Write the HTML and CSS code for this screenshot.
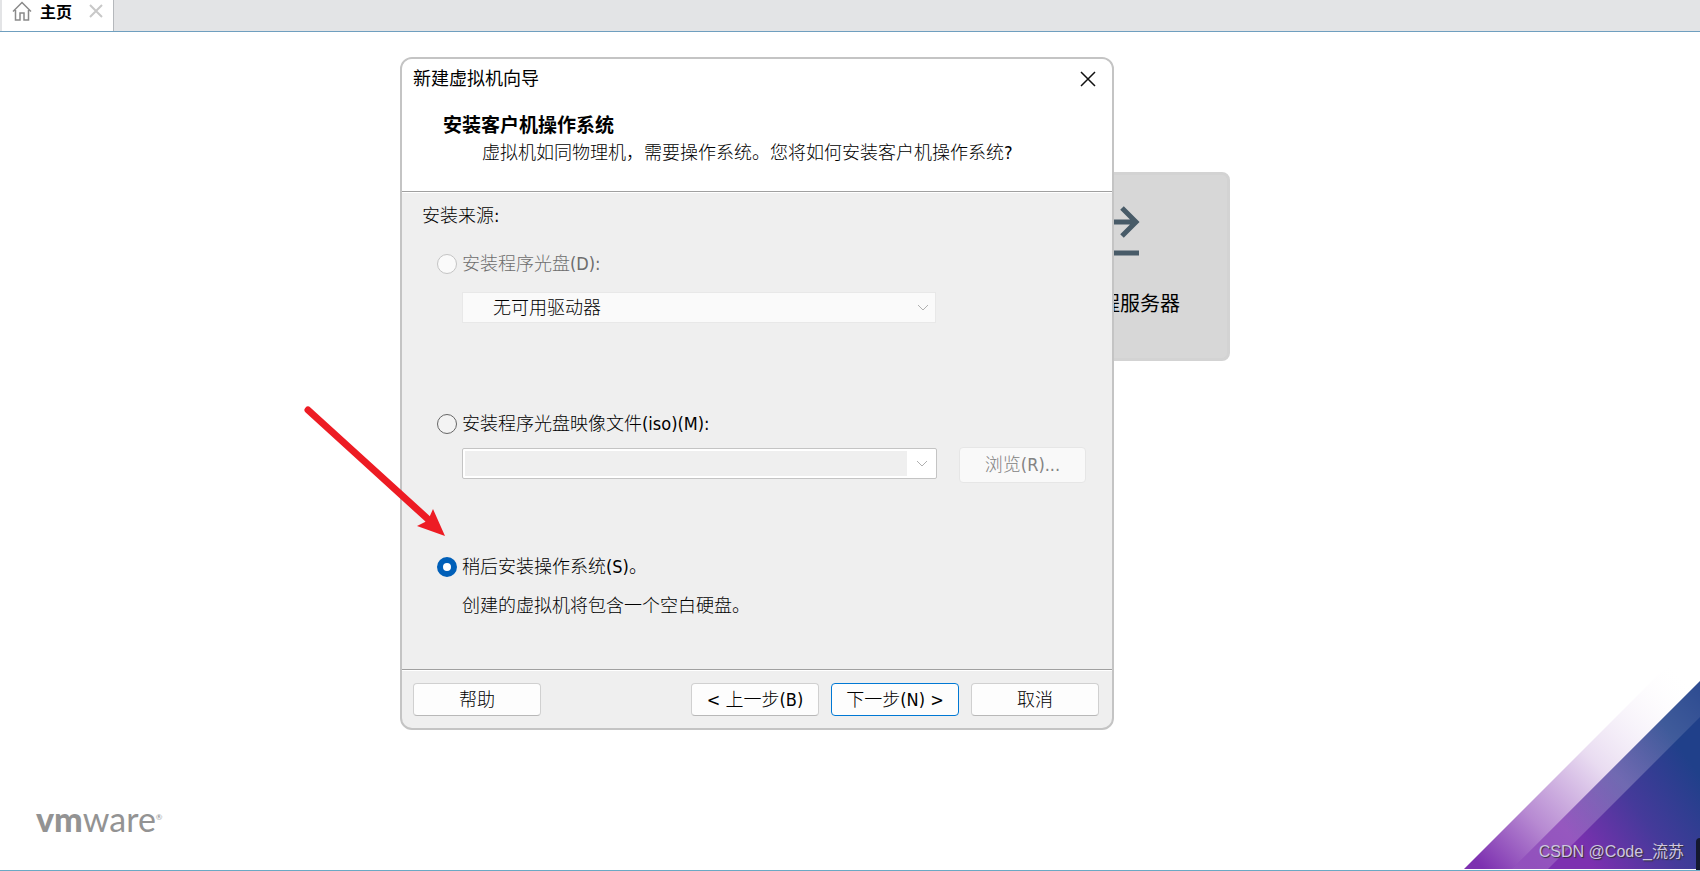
FILE: index.html
```html
<!DOCTYPE html>
<html lang="zh-CN">
<head>
    <meta charset="UTF-8">
    <meta name="viewport" content="width=device-width, initial-scale=1.0">
    <title>新建虚拟机向导</title>
    <link rel="stylesheet" href="styles.css">
</head>
<body>
    <nav class="tabs">
        <div class="tab">
            <svg class="home-icon" width="20" height="20" viewBox="0 0 20 20"><path d="M1 10.500 10 1.500l9 9M3.500 9v10H8v-7h4v7h4.500V9"/></svg>
            <a class="tab-name" href="#">主页</a>
            <button class="tab-close" aria-label="关闭标签">
                <svg width="14" height="14" viewBox="0 0 14 14"><path d="M1 1l12 12M13 1 1 13"/></svg>
            </button>
        </div>
    </nav>

    <main class="desktop">
        <button class="card">
            <svg width="60" height="60" viewBox="0 0 60 60">
                <path d="M2 23h54M42 9l14 14-14 14" stroke-width="5"/>
                <path d="M2 54h57" stroke-width="5"/>
            </svg>
            <span>连接远程服务器</span>
        </button>

        <div class="logo"><b>vm</b>ware<sup>®</sup></div>

        <svg class="corner" width="236" height="236" viewBox="0 0 236 236">
            <defs>
                <linearGradient id="fade" gradientUnits="userSpaceOnUse" x1="10" y1="226" x2="210" y2="30">
                    <stop offset="0" stop-color="#7d30b0"/>
                    <stop offset="0.25" stop-color="#b78ad2"/>
                    <stop offset="0.55" stop-color="#e9dcf1"/>
                    <stop offset="1" stop-color="#fff" stop-opacity="0"/>
                </linearGradient>
                <linearGradient id="base" gradientUnits="userSpaceOnUse" x1="104" y1="200" x2="220" y2="120">
                    <stop offset="0" stop-color="#7d30b0"/>
                    <stop offset="0.5" stop-color="#453a9a"/>
                    <stop offset="1" stop-color="#20408a"/>
                </linearGradient>
                <linearGradient id="shine" gradientUnits="userSpaceOnUse" x1="60" y1="226" x2="236" y2="50">
                    <stop offset="0" stop-color="#fff" stop-opacity="0.16"/>
                    <stop offset="0.5" stop-color="#fff" stop-opacity="0.24"/>
                    <stop offset="1" stop-color="#fff" stop-opacity="0.06"/>
                </linearGradient>
            </defs>
            <path d="M0 236 236 0v236z" fill="url(#fade)"/>
            <path d="M48 236 236 48v188z" fill="url(#base)"/>
            <path d="M48 236 236 48v36L84 236z" fill="url(#shine)"/>
        </svg>
        <div class="edge"></div>
        <div class="watermark">CSDN @Code_流苏</div>

        <form class="dialog">
            <header class="dialog-header">
                <div class="title-bar">
                    <span>新建虚拟机向导</span>
                    <button type="button" class="close" aria-label="关闭">
                        <svg width="16" height="16" viewBox="0 0 16 16"><path d="M1 1l14 14M15 1 1 15"/></svg>
                    </button>
                </div>
                <h1>安装客户机操作系统</h1>
                <p>虚拟机如同物理机，需要操作系统。您将如何安装客户机操作系统?</p>
            </header>

            <section class="options">
                <h2>安装来源:</h2>

                <label class="option disabled"><input type="radio" name="source" disabled>安装程序光盘(D):</label>
                <div class="drive">
                    <select aria-label="驱动器" disabled>
                        <option>无可用驱动器</option>
                    </select>
                    <svg class="chevron" width="12" height="8" viewBox="0 0 12 8"><path d="M1 1l5 5 5-5"/></svg>
                </div>

                <label class="option"><input type="radio" name="source">安装程序光盘映像文件(iso)(M):</label>
                <div class="iso-row">
                    <div class="combo">
                        <input type="text" aria-label="映像文件" disabled>
                        <button type="button" aria-label="展开" disabled>
                            <svg class="chevron" width="12" height="8" viewBox="0 0 12 8"><path d="M1 1l5 5 5-5"/></svg>
                        </button>
                    </div>
                    <button type="button" class="browse" disabled>浏览(R)...</button>
                </div>

                <label class="option"><input type="radio" name="source" checked>稍后安装操作系统(S)。</label>
                <p class="hint">创建的虚拟机将包含一个空白硬盘。</p>
            </section>

            <footer class="actions">
                <button type="button" class="btn help">帮助</button>
                <button type="button" class="btn">&lt; 上一步(B)</button>
                <button type="button" class="btn primary">下一步(N) &gt;</button>
                <button type="button" class="btn">取消</button>
            </footer>
        </form>

        <svg class="arrow" width="146" height="134" viewBox="0 0 146 134">
            <path d="M6 6 128 117" stroke="#ed1c24" stroke-width="7" stroke-linecap="round"/>
            <path d="M143 132 131 105 127 114 123 118 115 122z" fill="#ed1c24"/>
        </svg>
    </main>
</body>
</html>
```
FILE: styles.css
```css
* {
    box-sizing: border-box;
}
body {
    margin: 0;
    min-height: 100vh;
    display: flex;
    flex-direction: column;
    font-family: "DejaVu Sans Condensed", "Noto Sans", "Noto Sans CJK SC", sans-serif;
    font-size: 18px;
    line-height: 24px;
    color: #000;
    background-color: #fff;
    overflow: hidden;
}
button, select, input {
    font: inherit;
    color: inherit;
    margin: 0;
    padding: 0;
}
h1, h2, p {
    margin: 0;
}
svg {
    display: block;
    fill: none;
}

/* tab strip */
.tabs {
    display: flex;
    height: 32px;
    background-color: #e3e4e6;
    border-bottom: 1px solid #6f9fbf;
    padding-left: 2px;
}
.tab {
    display: flex;
    padding: 0 10px 9px;
    align-items: center;
    background-color: #fff;
    border-right: 1px solid #b5b8bc;
}
.home-icon {
    stroke: #8a8a8a;
    stroke-width: 1.5;
}
.tab-name {
    margin: 0 17px 0 8px;
    font-family: "Noto Sans CJK SC", sans-serif;
    font-size: 16px;
    font-weight: bold;
    color: #000;
    text-decoration: none;
}
.tab-close, .close {
    border: 0;
    background: none;
}
.tab-close svg {
    stroke: #c8c8c8;
    stroke-width: 2;
}

/* desktop */
.desktop {
    flex: 1;
    position: relative;
    border-bottom: 1px solid #6aa9c4;
}
.card {
    position: absolute;
    left: 990px;
    top: 140px;
    width: 240px;
    height: 189px;
    display: flex;
    flex-direction: column;
    align-items: center;
    gap: 32px;
    padding-top: 24px;
    border: 3px solid #d3d3d3;
    border-radius: 8px;
    background-color: #d7d7d7;
    font-family: "Noto Sans CJK SC", sans-serif;
    font-size: 20px;
}
.card svg {
    stroke: #485b68;
}
.logo {
    position: absolute;
    left: 36px;
    bottom: 31px;
    font-family: Lato, sans-serif;
    font-size: 34px;
    line-height: 40px;
    color: #939393;
}
.logo b {
    font-weight: 900;
}
.logo sup {
    font-size: 8px;
    line-height: 8px;
    vertical-align: 12px;
}
.corner {
    position: absolute;
    right: 0;
    bottom: 1px;
}
.edge {
    position: absolute;
    right: 0;
    bottom: 0;
    width: 4px;
    height: 32px;
    border-top-left-radius: 4px;
    background-color: #14182e;
}
.watermark {
    position: absolute;
    right: 16px;
    bottom: 6px;
    font-family: "Liberation Sans", "Noto Sans CJK SC", sans-serif;
    font-size: 16px;
    color: #cfc6e0;
    text-shadow: 1px 1px 1px #333;
}

/* wizard window */
.dialog {
    position: absolute;
    left: 400px;
    top: 25px;
    width: 714px;
    border: 2px solid #c4c4c4;
    border-radius: 12px;
    background-color: #efefef;
    font-weight: 300;
    overflow: hidden;
}
.dialog-header {
    padding-bottom: 26px;
    background-color: #fff;
    border-bottom: 1px solid #a0a0a0;
}
.title-bar {
    display: flex;
    justify-content: space-between;
    align-items: center;
    height: 40px;
    padding: 0 16px 0 11px;
    font-weight: 400;
}
.close svg {
    stroke: #111;
    stroke-width: 1.5;
}
.dialog-header h1 {
    padding: 14px 0 0 41px;
    font-size: 19px;
    font-weight: bold;
    line-height: 24px;
}
.dialog-header p {
    padding: 4px 0 0 80px;
}
.options {
    padding: 11px 26px 51px 35px;
    border-top: 1px solid #fff;
}
.options h2 {
    margin-left: -15px;
    font-size: 18px;
    font-weight: 300;
}
.option {
    display: flex;
    align-items: center;
    gap: 5px;
}
.option input {
    appearance: none;
    width: 20px;
    height: 20px;
    border: 1px solid #666;
    border-radius: 50%;
    background-color: #f3f3f3;
}
.option input:checked {
    border: 6px solid #005fb8;
    background-color: #fff;
}
.option input:disabled {
    border-color: #c4c4c4;
    background-color: #fafafa;
}
.disabled {
    margin-top: 24px;
    color: #6d6d6d;
}
.drive {
    position: relative;
    width: 474px;
    margin: 16px 0 89px 25px;
}
.drive select {
    appearance: none;
    display: block;
    width: 100%;
    height: 31px;
    padding-left: 30px;
    border: 1px solid #e8e8e8;
    border-radius: 0;
    background-color: #fafafa;
    color: #000;
    opacity: 1;
}
.drive .chevron {
    position: absolute;
    right: 7px;
    top: 12px;
}
.chevron {
    stroke: #b0b0b0;
}
.iso-row {
    display: flex;
    align-items: flex-start;
    justify-content: space-between;
    margin: 11px 0 72px 25px;
}
.combo {
    display: flex;
    width: 475px;
    height: 31px;
    margin-top: 1px;
    padding: 2px;
    border: 1px solid #c4c4c4;
    border-radius: 2px;
    background-color: #fff;
}
.combo input {
    flex: 1;
    border: 0;
    background-color: #efefef;
}
.combo button {
    width: 27px;
    padding-left: 9px;
    border: 0;
    background: none;
}
.browse {
    width: 127px;
    height: 36px;
    border: 1px solid #e6e6e6;
    border-radius: 4px;
    background-color: #f9f9f9;
    color: #838383;
}
.hint {
    padding: 15px 0 0 25px;
}
.actions {
    display: flex;
    gap: 12px;
    padding: 13px 13px 12px 11px;
    border-top: 1px solid #a0a0a0;
    box-shadow: inset 0 1px 0 #fff;
}
.btn {
    width: 128px;
    height: 33px;
    border: 1px solid #d0d0d0;
    border-bottom-color: #b8b8b8;
    border-radius: 4px;
    background-color: #fdfdfd;
}
.help {
    margin-right: auto;
}
.primary {
    border-color: #0078d4;
}

/* pointer drawn over the window */
.arrow {
    position: absolute;
    left: 302px;
    top: 372px;
}
```
